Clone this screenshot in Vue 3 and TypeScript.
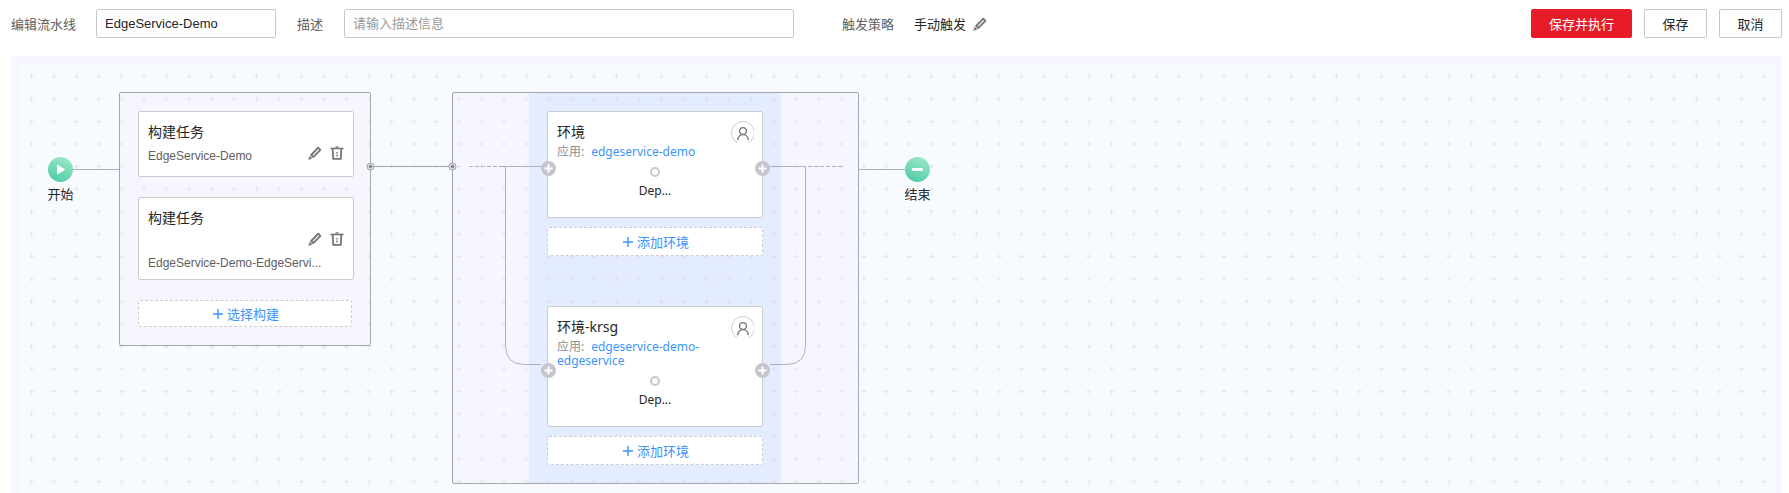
<script setup lang="ts">
import { ref } from 'vue'

interface BuildTask {
  title: string
  name: string
  stacked: boolean
}

interface Environment {
  title: string
  app: string
  step: string
}

const pipelineName = ref('EdgeService-Demo')
const description = ref('')

const builds: BuildTask[] = [
  { title: '构建任务', name: 'EdgeService-Demo', stacked: false },
  { title: '构建任务', name: 'EdgeService-Demo-EdgeServi...', stacked: true },
]

const environments: Environment[] = [
  { title: '环境', app: 'edgeservice-demo', step: 'Dep...' },
  { title: '环境-krsg', app: 'edgeservice-demo-edgeservice', step: 'Dep...' },
]
</script>

<template>
  <div class="page">
    <header class="toolbar">
      <label class="label" for="pipeline-name">编辑流水线</label>
      <input id="pipeline-name" v-model="pipelineName" class="field name-field" type="text" />
      <label class="label desc-label" for="pipeline-desc">描述</label>
      <input id="pipeline-desc" v-model="description" class="field desc-field" type="text" placeholder="请输入描述信息" />
      <span class="label trigger-label">触发策略</span>
      <span class="trigger-value">手动触发</span>
      <button class="icon-button" type="button" aria-label="编辑触发策略">
        <svg class="icon" viewBox="0 0 14 14">
          <path d="M3.2 9 10.2 1.7 12.4 3.9 5.2 11.1Z" fill="none" stroke="#75757a" stroke-width="1.9" stroke-linejoin="round" />
          <path d="M1.7 9.8 4.3 12.4.2 13.9Z" fill="#75757a" />
        </svg>
      </button>
      <div class="actions">
        <button class="button primary" type="button">保存并执行</button>
        <button class="button" type="button">保存</button>
        <button class="button" type="button">取消</button>
      </div>
    </header>

    <main class="canvas">
      <svg class="grid" aria-hidden="true">
        <defs>
          <pattern id="grid-marks" width="45" height="45" patternUnits="userSpaceOnUse">
            <path
              d="M9 11.5h5M11.5 9v5M31.5 11.5h5M34 9v5M9 34h5M11.5 31.5v5M31.5 34h5M34 31.5v5"
              stroke="#e7e3ea"
              fill="none"
            />
          </pattern>
        </defs>
        <rect width="100%" height="100%" fill="#f7fbff" />
        <rect width="100%" height="100%" fill="url(#grid-marks)" />
      </svg>

      <div class="flow">
        <div class="endpoint">
          <svg class="endpoint-icon" viewBox="0 0 25 25">
            <defs>
              <linearGradient id="endpoint-fill" x1="0.7" y1="0" x2="0.3" y2="1">
                <stop offset="0" stop-color="#9be8c4" />
                <stop offset="1" stop-color="#4fcba8" />
              </linearGradient>
            </defs>
            <circle cx="12.5" cy="12.5" r="12.5" fill="url(#endpoint-fill)" />
            <path d="M9.5 8.3v8.6L16.5 12.6Z" fill="#fff" stroke="#fff" stroke-linejoin="round" />
          </svg>
          <span>开始</span>
        </div>

        <div class="edge"></div>

        <section class="stage build-stage">
          <article v-for="build in builds" :key="build.name" class="card build-card">
            <h2 class="card-title">{{ build.title }}</h2>
            <div class="build-row" :class="{ stacked: build.stacked }">
              <span class="build-name">{{ build.name }}</span>
              <span class="build-tools">
                <button class="icon-button" type="button" aria-label="编辑">
                  <svg class="icon" viewBox="0 0 14 14">
                    <path d="M3.2 9 10.2 1.7 12.4 3.9 5.2 11.1Z" fill="none" stroke="#75757a" stroke-width="1.9" stroke-linejoin="round" />
                    <path d="M1.7 9.8 4.3 12.4.2 13.9Z" fill="#75757a" />
                  </svg>
                </button>
                <button class="icon-button" type="button" aria-label="删除">
                  <svg class="icon" viewBox="0 0 14 14" fill="none" stroke="#75757a">
                    <path d="M.5 2.5h13" stroke-width="1.6" />
                    <path d="M5.5 1h3" stroke-width="1.4" />
                    <path d="M2.7 2.8 3.2 12.8h7.6L11.3 2.8" stroke-width="1.8" />
                    <path d="M7 6v1.5M7 8.5v2" stroke-width="1.4" />
                  </svg>
                </button>
              </span>
            </div>
          </article>
          <button class="add-button add-build" type="button">
            <svg class="add-icon" viewBox="0 0 10 10"><path d="M0 5h10M5 0v10" stroke="currentColor" stroke-width="1.4" /></svg>
            选择构建
          </button>
        </section>

        <div class="link-edge">
          <svg class="dot dot-start" viewBox="0 0 9 9">
            <circle cx="4.5" cy="4.5" r="3.5" fill="#f2f2f7" stroke="#9b9ba6" />
            <circle cx="4.5" cy="4.5" r="2" fill="#8b8b98" />
          </svg>
          <svg class="dot dot-end" viewBox="0 0 9 9">
            <circle cx="4.5" cy="4.5" r="3.5" fill="#f2f2f7" stroke="#9b9ba6" />
            <circle cx="4.5" cy="4.5" r="2" fill="#8b8b98" />
          </svg>
        </div>

        <section class="stage env-stage">
          <svg class="branch branch-in" viewBox="0 0 95 280" fill="none" stroke="#b0b0bc" aria-hidden="true">
            <path d="M16 73.5h34" stroke-dasharray="4 2" />
            <path d="M50 73.5h45M52.5 73.5V252.5Q52.5 271.5 71.5 271.5H88" />
          </svg>
          <div class="lane">
            <div v-for="env in environments" :key="env.title" class="env-group">
              <article class="card env-card">
                <h2 class="card-title">{{ env.title }}</h2>
                <p class="env-app">应用:<a class="app-link" href="#">{{ env.app }}</a></p>
                <span class="step-ring"></span>
                <p class="step-name">{{ env.step }}</p>
                <svg class="approver" viewBox="0 0 23 22" fill="none">
                  <circle cx="12" cy="12" r="11.5" stroke="#cdcdd0" />
                  <circle cx="12" cy="10" r="3.4" stroke="#77777c" stroke-width="1.3" />
                  <path d="M6.8 19.2C6.8 11.7 17.2 11.7 17.2 19.2" stroke="#77777c" stroke-width="1.3" />
                </svg>
                <button
                  v-for="side in ['before', 'after']"
                  :key="side"
                  class="insert"
                  :class="side"
                  type="button"
                  :aria-label="side === 'before' ? '在前面添加' : '在后面添加'"
                >
                  <svg class="insert-icon" viewBox="0 0 15 15">
                    <circle cx="7.5" cy="7.5" r="7.5" fill="#c5c5cf" />
                    <path d="M3.5 7.5h8M7.5 3.5v8" stroke="#fff" stroke-width="2" />
                  </svg>
                </button>
              </article>
              <button class="add-button add-env" type="button">
                <svg class="add-icon" viewBox="0 0 10 10"><path d="M0 5h10M5 0v10" stroke="currentColor" stroke-width="1.4" /></svg>
                添加环境
              </button>
            </div>
          </div>
          <svg class="branch branch-out" viewBox="0 0 95 280" fill="none" stroke="#b0b0bc" aria-hidden="true">
            <path d="M6 73.5h37M42.5 73.5V252.5Q42.5 271.5 23.5 271.5H7" />
            <path d="M45 73.5h34" stroke-dasharray="4 2" />
          </svg>
        </section>

        <div class="edge"></div>

        <div class="endpoint">
          <svg class="endpoint-icon" viewBox="0 0 25 25">
            <circle cx="12.5" cy="12.5" r="12.5" fill="url(#endpoint-fill)" />
            <rect x="7" y="11" width="11" height="3" rx="1" fill="#fff" />
          </svg>
          <span>结束</span>
        </div>
      </div>
    </main>
  </div>
</template>

<style>
body {
  margin: 0;
  background: #fff;
}
</style>

<style scoped>
* {
  box-sizing: border-box;
}

.page {
  display: flex;
  flex-direction: column;
  min-height: 100vh;
  padding: 0 7px 0 11px;
  color: #252525;
  font-family: "Liberation Sans", "Noto Sans CJK SC", sans-serif;
  font-size: 13px;
}

button,
input {
  font: inherit;
}

.toolbar {
  display: flex;
  align-items: center;
  height: 56px;
  padding-bottom: 9px;
}

.label {
  color: #606060;
  white-space: nowrap;
}

.field {
  height: 29px;
  padding: 0 8px;
  border: 1px solid #c8c8cc;
  border-radius: 2px;
  background: #fff;
  color: #252525;
}

.field::placeholder {
  color: #999;
  opacity: 1;
}

.name-field {
  width: 180px;
  margin-left: 20px;
}

.desc-label {
  margin-left: 21px;
}

.desc-field {
  width: 450px;
  margin-left: 21px;
}

.trigger-label {
  margin-left: 48px;
}

.trigger-value {
  margin-left: 20px;
  color: #252525;
  white-space: nowrap;
}

.icon-button {
  display: block;
  flex: none;
  padding: 0;
  border: 0;
  background: none;
}

.toolbar .icon-button {
  margin-left: 7px;
}

.icon {
  display: block;
  width: 14px;
  height: 14px;
}

.actions {
  display: flex;
  gap: 12px;
  margin-left: auto;
}

.button {
  min-width: 63px;
  height: 29px;
  padding: 0 16px;
  border: 1px solid #c8c8cc;
  border-radius: 2px;
  background: #fff;
  color: #252525;
  white-space: nowrap;
}

.primary {
  padding: 0 17px;
  border-color: #e81c28;
  background: #e81c28;
  color: #fff;
}

.canvas {
  position: relative;
  flex: 1;
  padding: 36px 37px 9px;
  background: #f7f7ff;
}

.grid {
  position: absolute;
  top: 9px;
  left: 9px;
  width: calc(100% - 21px);
  height: calc(100% - 9px);
}

.flow {
  position: relative;
  display: flex;
  align-items: flex-start;
}

.endpoint {
  display: flex;
  flex: none;
  flex-direction: column;
  align-items: center;
  gap: 4px;
  width: 25px;
  margin-top: 65px;
  color: #252525;
  line-height: 18px;
  white-space: nowrap;
}

.endpoint-icon {
  width: 25px;
  height: 25px;
}

.edge {
  flex: none;
  width: 46px;
  margin-top: 77px;
  border-top: 1px solid #b0b0bc;
}

.link-edge {
  position: relative;
  z-index: 1;
  flex: none;
  width: 81px;
  margin-top: 74px;
  border-top: 1px solid #a2a2ac;
}

.dot {
  position: absolute;
  top: -5px;
  width: 9px;
  height: 9px;
}

.dot-start {
  left: -5px;
}

.dot-end {
  right: -5px;
}

.stage {
  flex: none;
  border: 1px solid #a6a6ad;
  border-radius: 2px;
  background: rgba(247, 231, 255, 0.2);
}

.build-stage {
  display: flex;
  flex-direction: column;
  gap: 20px;
  padding: 18px 16px 18px 18px;
}

.card {
  position: relative;
  width: 216px;
  border: 1px solid #cbcbd0;
  border-radius: 2px;
  background: #fff;
}

.build-card {
  padding: 10px 9px 6px;
}

.card-title {
  margin: 0;
  color: #252525;
  font-family: "Noto Sans", "Noto Sans CJK SC", sans-serif;
  font-size: 14px;
  font-weight: 400;
  line-height: 20px;
}

.build-row {
  display: flex;
  align-items: flex-start;
  justify-content: space-between;
  min-height: 24px;
  margin-top: 4px;
}

.build-name {
  color: #606060;
  font-size: 12px;
  line-height: 20px;
}

.build-tools {
  display: flex;
  gap: 8px;
}

.build-row.stacked {
  flex-direction: column-reverse;
  gap: 7px;
}

.stacked .build-tools {
  align-self: flex-end;
}

.add-button {
  display: flex;
  align-items: center;
  justify-content: center;
  gap: 4px;
  padding: 0 0 0 2px;
  border: 1px dashed #cbcbd0;
  border-radius: 2px;
  background: #fff;
  color: #3b93ff;
}

.add-icon {
  width: 10px;
  height: 10px;
}

.add-build {
  width: 214px;
  height: 27px;
}

.env-stage {
  position: relative;
  display: flex;
  padding: 0 77px 0 76px;
}

.branch {
  position: absolute;
  z-index: 1;
  top: 0;
  width: 95px;
  height: 280px;
}

.branch-in {
  left: 0;
}

.branch-out {
  right: 0;
}

.lane {
  display: flex;
  flex-direction: column;
  gap: 50px;
  padding: 18px;
  background: rgba(162, 202, 255, 0.2);
}

.env-card {
  padding: 10px 9px 18px;
  font-family: "Noto Sans", "Noto Sans CJK SC", sans-serif;
  font-size: 12px;
}

.env-app {
  margin: 3px 0 0;
  color: #8e8e93;
  line-height: 14px;
}

.app-link {
  margin-left: 7px;
  color: #3b93ff;
  text-decoration: none;
}

.step-ring {
  display: block;
  width: 10px;
  height: 10px;
  margin: 8px auto 6px;
  border: 2px solid #c8c8cc;
  border-radius: 50%;
}

.step-name {
  margin: 0;
  color: #252525;
  line-height: 16px;
  text-align: center;
}

.approver {
  position: absolute;
  top: 9px;
  right: 8px;
  width: 23px;
  height: 22px;
}

.insert {
  position: absolute;
  z-index: 2;
  top: calc(50% - 4px);
  width: 15px;
  height: 15px;
  padding: 0;
  border: 0;
  background: none;
}

.before {
  left: -7px;
}

.after {
  right: -8px;
}

.insert-icon {
  display: block;
  width: 15px;
  height: 15px;
}

.add-env {
  width: 216px;
  height: 29px;
  margin-top: 9px;
}
</style>
